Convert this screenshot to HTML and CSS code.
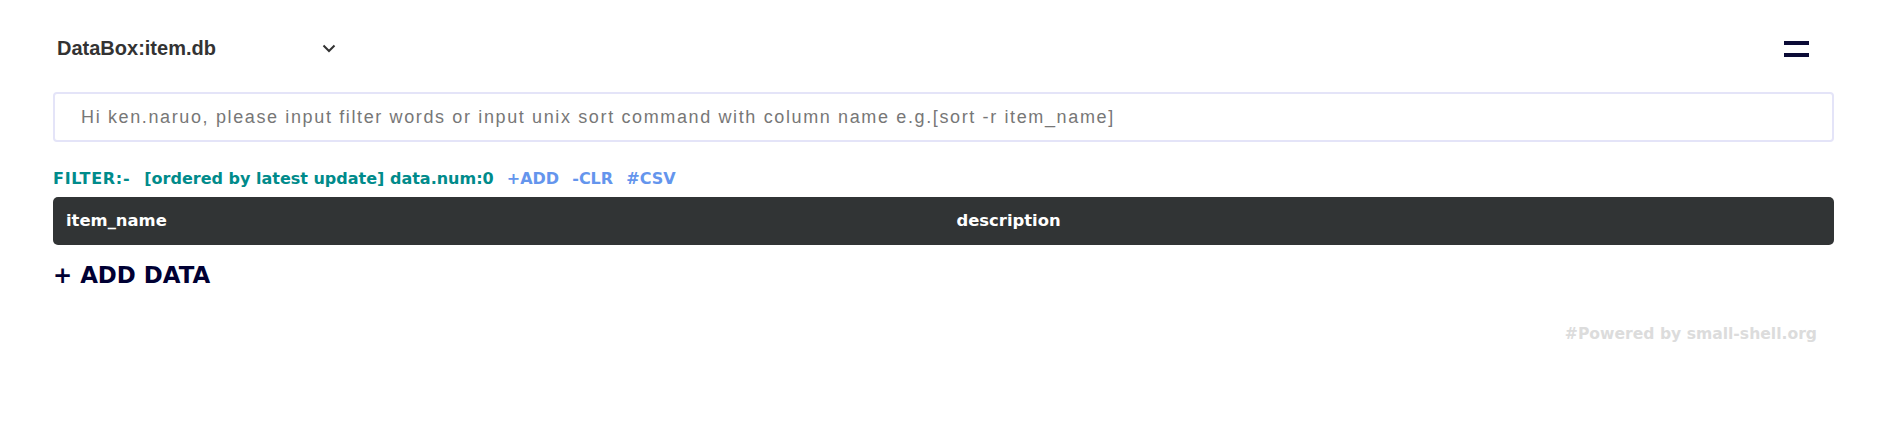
FILE: index.html
```html
<!DOCTYPE html>
<html lang="en">
<head>
<meta charset="utf-8">
<title>DataBox:item.db</title>
<link rel="stylesheet" href="styles.css">
</head>
<body>
<div class="page">
  <header class="topbar">
    <div class="db-select">
      <span class="db-name">DataBox:item.db</span>
      <svg class="chevron" width="14" height="9" viewBox="0 0 14 9"><path d="M1.5 1.5 L7 7 L12.5 1.5" fill="none" stroke="#333" stroke-width="2"/></svg>
    </div>
    <div class="menu-btn" aria-label="menu">
      <span class="bar"></span>
      <span class="bar"></span>
    </div>
  </header>
  <input class="filter-input" type="text" placeholder="Hi ken.naruo, please input filter words or input unix sort command with column name e.g.[sort -r item_name]">
  <div class="filter-line">
    <span class="teal label">FILTER:-</span><span class="teal order">[ordered by latest update] data.num:0</span>
    <a class="act">+ADD</a>
    <a class="act">-CLR</a>
    <a class="act">#CSV</a>
  </div>
  <div class="table-head">
    <div class="col">item_name</div>
    <div class="col">description</div>
  </div>
  <div class="add-data">+ ADD DATA</div>
  <div class="powered">#Powered by small-shell.org</div>
</div>
</body>
</html>
```
FILE: styles.css
```css
html, body {
  margin: 0;
  padding: 0;
  background: #fff;
}
.page {
  width: 1781px;
  padding-left: 53px;
  font-family: "DejaVu Sans", Verdana, sans-serif;
}
.topbar {
  display: flex;
  justify-content: space-between;
  align-items: flex-start;
  padding-top: 36px;
  height: 56px;
  box-sizing: border-box;
}
.db-select {
  display: flex;
  align-items: center;
  width: 283px;
  justify-content: space-between;
}
.db-name {
  font-family: "Liberation Sans", Arial, sans-serif;
  font-weight: bold;
  font-size: 20px;
  line-height: 24px;
  color: #333;
  padding-left: 4px;
}
.chevron {
  display: block;
  margin-top: 1px;
}
.menu-btn {
  margin-right: 25px;
  margin-top: 5px;
  width: 25px;
  display: flex;
  flex-direction: column;
  gap: 8px;
}
.bar {
  display: block;
  height: 4px;
  background: #0b0b36;
}
.filter-input {
  display: block;
  box-sizing: border-box;
  width: 1781px;
  height: 50px;
  margin: 36px 0 0;
  border: 2px solid #e4e4f8;
  border-radius: 4px;
  padding: 0 0 0 26px;
  font-family: "Liberation Sans", Arial, sans-serif;
  font-size: 18px;
  letter-spacing: 1.63px;
  outline: none;
}
.filter-input::placeholder {
  color: #777;
}
.filter-line {
  margin-top: 27px;
  font-size: 16px;
  line-height: 20px;
  font-weight: bold;
  white-space: nowrap;
}
.teal {
  color: #008b8b;
}
.label {
  letter-spacing: 0.7px;
}
.order {
  margin-left: 14px;
}
.act {
  color: #6495ed;
  margin-left: 7.5px;
}
.table-head {
  margin-top: 8px;
  display: grid;
  grid-template-columns: 1fr 1fr;
  height: 48px;
  background: #313435;
  border-radius: 5px;
  color: #fff;
  font-weight: bold;
  font-size: 16.4px;
  line-height: 48px;
}
.col {
  padding-left: 13px;
}
.add-data {
  margin-top: 16px;
  font-size: 22.9px;
  line-height: 28px;
  font-weight: bold;
  color: #000033;
}
.powered {
  margin-top: 35px;
  text-align: right;
  padding-right: 17px;
  font-size: 15.6px;
  line-height: 20px;
  font-weight: bold;
  color: #dcdcdc;
}
```
